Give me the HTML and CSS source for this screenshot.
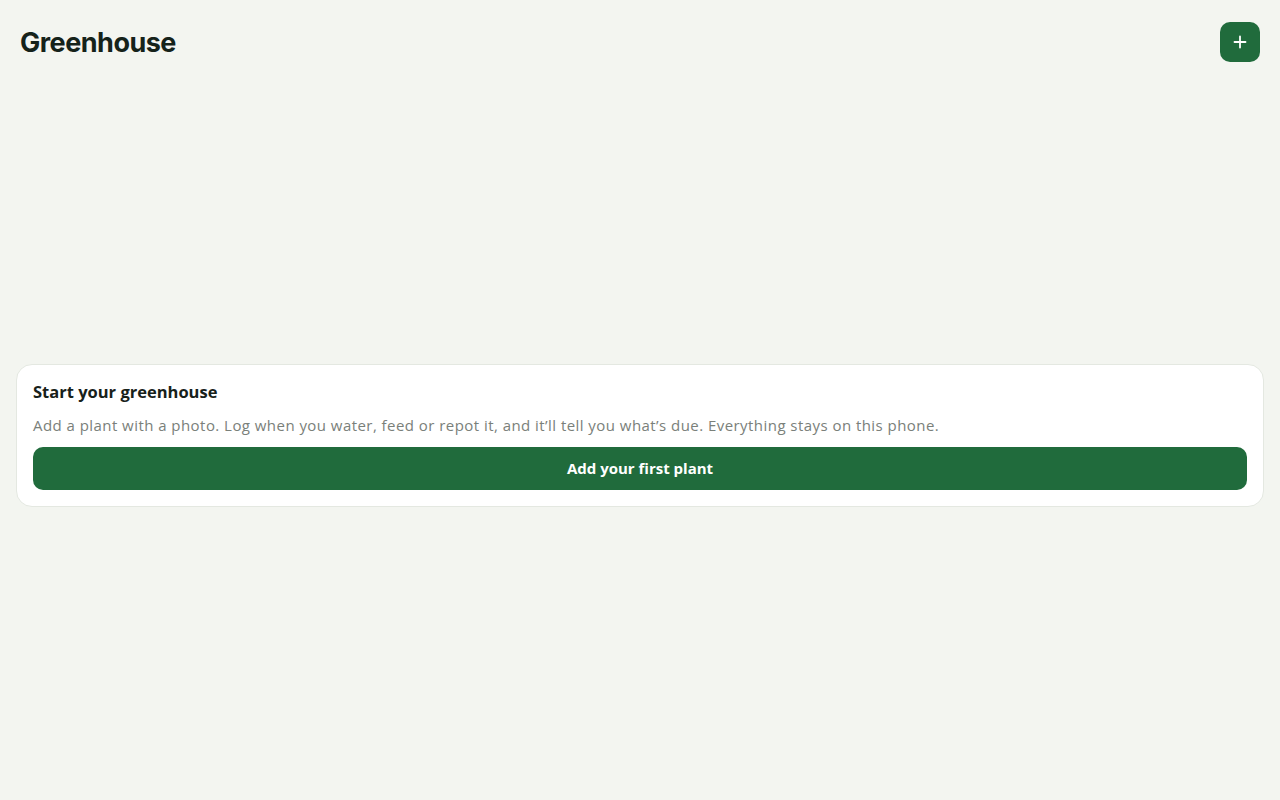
FILE: index.html
```html
<!DOCTYPE html>
<html lang="en">
<head>
<meta charset="utf-8">
<title>Greenhouse</title>
<link rel="stylesheet" href="styles.css">
</head>
<body>
<div class="app">
  <header class="topbar">
    <h1 class="title">Greenhouse</h1>
    <button class="add-btn" aria-label="Add plant">
      <svg width="16" height="16" viewBox="0 0 16 16"><path d="M8 2.5v11M2.5 8h11" stroke="#fff" stroke-width="1.8" stroke-linecap="round" fill="none"/></svg>
    </button>
  </header>
  <main class="main">
    <section class="card">
      <h2 class="card-title">Start your greenhouse</h2>
      <p class="card-text">Add a plant with a photo. Log when you water, feed or repot it, and it’ll tell you what’s due. Everything stays on this phone.</p>
      <button class="primary">Add your first plant</button>
    </section>
  </main>
</div>
</body>
</html>
```
FILE: styles.css
```css
* { box-sizing: border-box; }
html, body { margin: 0; padding: 0; }
body {
  background: #f3f5f0;
  font-family: "Open Sans", "DejaVu Sans", sans-serif;
  color: #17211a;
}
.app {
  min-height: 100vh;
  display: flex;
  flex-direction: column;
}
.topbar {
  display: flex;
  align-items: center;
  justify-content: space-between;
  padding: 22px 20px 8px 20px;
}
.title {
  margin: 0;
  font-family: Inter, "Liberation Sans", sans-serif;
  font-size: 27px;
  font-weight: 700;
  letter-spacing: -0.5px;
  color: #15221a;
  line-height: 38px;
  padding-top: 2px;
}
.add-btn {
  width: 40px;
  height: 40px;
  border: none;
  border-radius: 10px;
  background: #206b3c;
  display: flex;
  align-items: center;
  justify-content: center;
  padding: 0;
}
.main {
  flex: 1;
  display: flex;
  flex-direction: column;
  justify-content: center;
  padding: 0 16px;
}
.card {
  background: #ffffff;
  border: 1px solid #e4e8e1;
  border-radius: 16px;
  padding: 16px;
}
.card-title {
  margin: 0;
  font-size: 16.5px;
  font-weight: 700;
  color: #17211a;
  line-height: 22px;
}
.card-text {
  margin: 12px 0 12px 0;
  font-size: 15px;
  letter-spacing: 0.45px;
  line-height: 20px;
  color: #7a807a;
}
.primary {
  display: block;
  width: 100%;
  height: 43px;
  border: none;
  border-radius: 10px;
  background: #206b3c;
  color: #ffffff;
  font-family: inherit;
  font-size: 15px;
  font-weight: 700;
}
```
